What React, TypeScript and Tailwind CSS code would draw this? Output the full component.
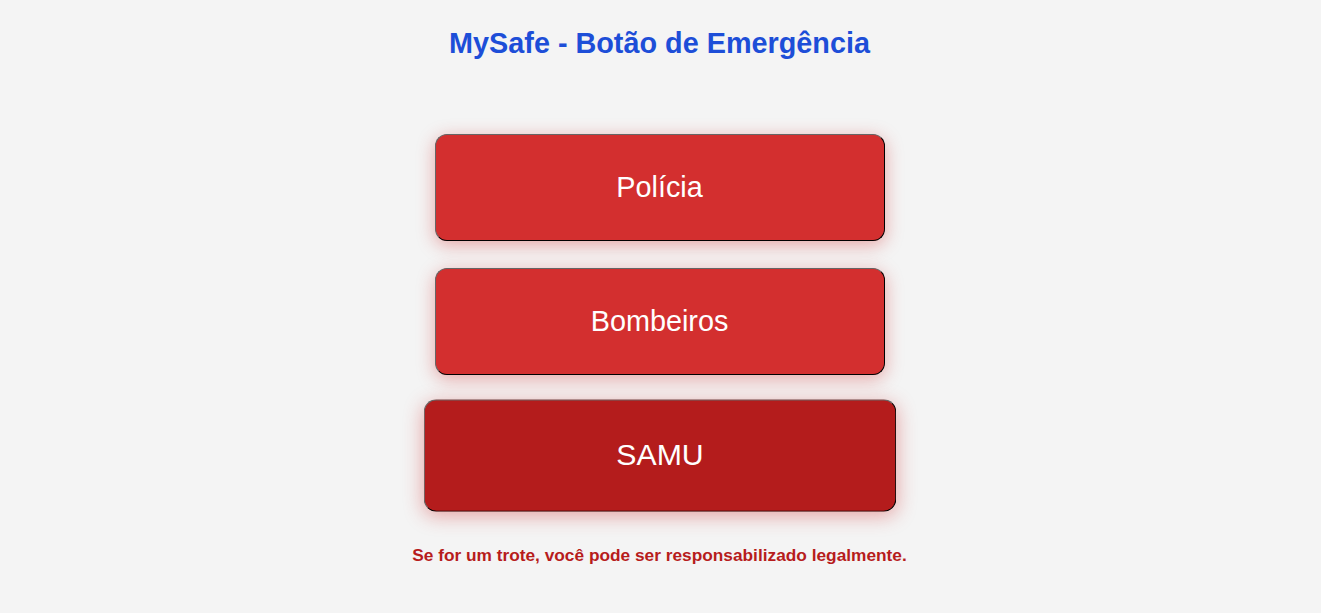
import React from "react";

const buttons = [
  { label: "Polícia", active: false },
  { label: "Bombeiros", active: false },
  { label: "SAMU", active: true },
];

const App = () => {
  return (
    <main className="w-full min-h-[613px] bg-[#f4f4f4] flex flex-col items-center pt-[27px] pr-[2px] font-['Liberation_Sans',Arial,sans-serif]">
      <h1 className="text-[28.8px] leading-[33px] font-bold text-[#1d4ed8]">
        MySafe - Botão de Emergência
      </h1>

      <div className="mt-[74px] flex flex-col items-center gap-[27px]">
        {buttons.map((b) => (
          <button
            key={b.label}
            className={
              b.active
                ? "w-[450px] h-[107px] rounded-xl border border-t-[#666] border-l-[#666] border-r-black border-b-black bg-[#b41c1c] text-white text-[28.8px] scale-105 shadow-[0_4px_18px_rgba(211,47,47,0.4)]"
                : "w-[450px] h-[107px] rounded-xl border border-t-[#666] border-l-[#666] border-r-black border-b-black bg-[#d32f2f] text-white text-[28.8px] shadow-[0_4px_18px_rgba(211,47,47,0.4)]"
            }
          >
            {b.label}
          </button>
        ))}
      </div>

      <p className="mt-[36px] text-[17.3px] leading-[20px] font-bold text-[#b71c1c]">
        Se for um trote, você pode ser responsabilizado legalmente.
      </p>
    </main>
  );
};

export default App;
